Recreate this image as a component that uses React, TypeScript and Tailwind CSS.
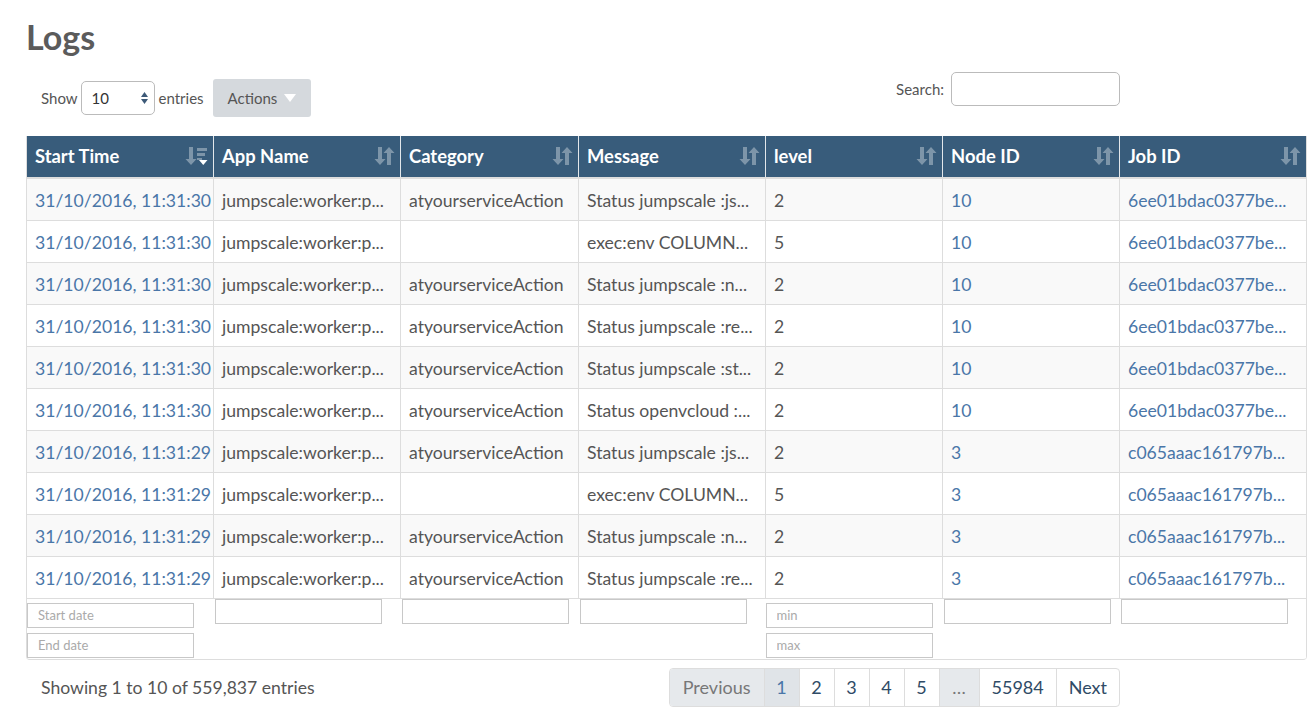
import React from "react"

const rows = [
    ["31/10/2016, 11:31:30", "jumpscale:worker:p...", "atyourserviceAction", "Status jumpscale :js...", "2", "10", "6ee01bdac0377be..."],
    ["31/10/2016, 11:31:30", "jumpscale:worker:p...", "", "exec:env COLUMN...", "5", "10", "6ee01bdac0377be..."],
    ["31/10/2016, 11:31:30", "jumpscale:worker:p...", "atyourserviceAction", "Status jumpscale :n...", "2", "10", "6ee01bdac0377be..."],
    ["31/10/2016, 11:31:30", "jumpscale:worker:p...", "atyourserviceAction", "Status jumpscale :re...", "2", "10", "6ee01bdac0377be..."],
    ["31/10/2016, 11:31:30", "jumpscale:worker:p...", "atyourserviceAction", "Status jumpscale :st...", "2", "10", "6ee01bdac0377be..."],
    ["31/10/2016, 11:31:30", "jumpscale:worker:p...", "atyourserviceAction", "Status openvcloud :...", "2", "10", "6ee01bdac0377be..."],
    ["31/10/2016, 11:31:29", "jumpscale:worker:p...", "atyourserviceAction", "Status jumpscale :js...", "2", "3", "c065aaac161797b..."],
    ["31/10/2016, 11:31:29", "jumpscale:worker:p...", "", "exec:env COLUMN...", "5", "3", "c065aaac161797b..."],
    ["31/10/2016, 11:31:29", "jumpscale:worker:p...", "atyourserviceAction", "Status jumpscale :n...", "2", "3", "c065aaac161797b..."],
    ["31/10/2016, 11:31:29", "jumpscale:worker:p...", "atyourserviceAction", "Status jumpscale :re...", "2", "3", "c065aaac161797b..."],
]

const columns = [
    { title: "Start Time", width: "w-[187px]" },
    { title: "App Name", width: "w-[187px]" },
    { title: "Category", width: "w-[178px]" },
    { title: "Message", width: "w-[187px]" },
    { title: "level", width: "w-[177px]" },
    { title: "Node ID", width: "w-[177px]" },
    { title: "Job ID", width: "w-[187px]" },
]

const linkCols = [0, 5, 6]

const SortIcon = () => (
    <svg width="21" height="22" viewBox="0 0 21 22" className="opacity-35">
        <path d="M4 2h4v12h3.5L6 20 0.5 14H4z" fill="#fff" />
        <path d="M13 20h4V8h3.5L15 2 9.5 8H13z" fill="#fff" />
    </svg>
)

const SortDescIcon = () => (
    <svg width="23" height="22" viewBox="0 0 23 22">
        <path d="M4 2h4v12h3.5L6 20 0.5 14H4z" fill="#fff" opacity="0.35" />
        <rect x="12" y="3" width="10" height="3" fill="#fff" opacity="0.35" />
        <rect x="12" y="8" width="8" height="3" fill="#fff" opacity="0.35" />
        <rect x="12" y="13" width="5" height="2" fill="#fff" opacity="0.35" />
        <path d="M14 15h8.5l-4.25 5z" fill="#fff" />
    </svg>
)

const FilterInput = ({ placeholder }: { placeholder?: string }) => (
    <input
        placeholder={placeholder}
        className="block w-[167px] h-[25px] border border-[#c8c8c8] px-[10px] text-[13px] text-[#555] placeholder:text-[#aaa] outline-none bg-white"
    />
)

const App = () => {
    return (
        <div className="w-[1315px] min-h-[714px] bg-white px-[26px] font-['Lato','Open_Sans',sans-serif] text-[#555]">
            <h1 className="pt-[15px] text-[34px] leading-[44px] font-bold text-[#5b5b5b]">Logs</h1>

            <div className="flex w-[1094px] justify-between items-start">
                <div className="flex items-center pl-[15px] pt-[20px] text-[15px]">
                    <span>Show</span>
                    <div className="ml-[3px] flex items-center justify-between w-[74px] h-[34px] border border-[#bbb] rounded-[5px] pl-[10px] pr-[6px] text-[15px] text-[#333]">
                        <span>10</span>
                        <svg width="7" height="12" viewBox="0 0 7 12">
                            <path d="M3.5 0L7 5H0z" fill="#3d5a78" />
                            <path d="M3.5 12L7 7H0z" fill="#3d5a78" />
                        </svg>
                    </div>
                    <span className="ml-[4px]">entries</span>
                    <button className="ml-[9px] flex items-center gap-[7px] h-[38px] px-[15px] bg-[#d5d9dd] rounded-[3px] text-[15px] text-[#555]">
                        Actions
                        <svg width="12" height="8" viewBox="0 0 12 8">
                            <path d="M0 0h12L6 8z" fill="#fff" />
                        </svg>
                    </button>
                </div>
                <div className="flex items-center pt-[13px] text-[15px]">
                    <span>Search:</span>
                    <input className="ml-[7px] w-[169px] h-[34px] border border-[#bbb] rounded-[5px] outline-none" />
                </div>
            </div>

            <div className="mt-[19px] w-[1281px] border-b border-[#ddd] rounded-b-[4px] overflow-hidden">
                <table className="w-[1281px] table-fixed border-collapse border-x border-[#ddd]">
                    <colgroup>
                        {columns.map((c) => (
                            <col key={c.title} className={c.width} />
                        ))}
                    </colgroup>
                    <thead>
                        <tr className="bg-[#385c7b] h-[42px] border-b-2 border-[#ddd]">
                            {columns.map((c, i) => (
                                <th
                                    key={c.title}
                                    className={`text-left text-white text-[18.4px] font-bold pl-[8px] pr-[5px] ${i < columns.length - 1 ? "border-r border-[#e2e7eb]" : ""}`}
                                >
                                    <div className="flex items-center justify-between">
                                        <span>{c.title}</span>
                                        <span className="flex">{i === 0 ? <SortDescIcon /> : <SortIcon />}</span>
                                    </div>
                                </th>
                            ))}
                        </tr>
                    </thead>
                    <tbody>
                        {rows.map((r, ri) => (
                            <tr key={ri} className={`h-[42px] border-b border-[#ddd] ${ri % 2 === 0 ? "bg-[#f9f9f9]" : "bg-white"}`}>
                                {r.map((cell, ci) => (
                                    <td
                                        key={ci}
                                        className={`px-[8px] pt-[4px] pb-0 text-[17.6px] whitespace-nowrap overflow-hidden ${linkCols.includes(ci) ? "text-[#4a76a8]" : "text-[#555]"} ${ci < r.length - 1 ? "border-r border-[#ddd]" : ""}`}
                                    >
                                        {cell}
                                    </td>
                                ))}
                            </tr>
                        ))}
                        <tr className="align-top h-[60px]">
                            <td className="pt-[4px] pb-[1px]">
                                <div className="flex flex-col gap-[5px]">
                                    <FilterInput placeholder="Start date" />
                                    <FilterInput placeholder="End date" />
                                </div>
                            </td>
                            <td className="pl-[1px]"><FilterInput /></td>
                            <td className="pl-[1px]"><FilterInput /></td>
                            <td className="pl-[1px]"><FilterInput /></td>
                            <td className="pt-[4px] pb-[1px]">
                                <div className="flex flex-col gap-[5px]">
                                    <FilterInput placeholder="min" />
                                    <FilterInput placeholder="max" />
                                </div>
                            </td>
                            <td className="pl-[1px]"><FilterInput /></td>
                            <td className="pl-[1px]"><FilterInput /></td>
                        </tr>
                    </tbody>
                </table>
            </div>

            <div className="flex items-center mt-[8px] w-[1094px]">
                <span className="pl-[15px] pt-[3px] text-[17.6px] text-[#555]">Showing 1 to 10 of 559,837 entries</span>
                <div className="ml-auto flex h-[39px] border border-[#ddd] rounded-[4px] overflow-hidden text-[18px]">
                    <span className="flex items-center px-[13px] bg-[#e6e9ec] text-[#777] border-r border-[#ddd]">Previous</span>
                    <span className="flex items-center justify-center w-[35px] bg-[#e0e4e8] text-[#4a76a8] border-r border-[#ddd]">1</span>
                    {["2", "3", "4", "5"].map((p) => (
                        <span key={p} className="flex items-center justify-center w-[35px] text-[#2f4b66] border-r border-[#ddd]">{p}</span>
                    ))}
                    <span className="flex items-center justify-center w-[40px] bg-[#e6e9ec] text-[#777] border-r border-[#ddd]">…</span>
                    <span className="flex items-center px-[12px] text-[#2f4b66] border-r border-[#ddd]">55984</span>
                    <span className="flex items-center px-[12px] text-[#2f4b66]">Next</span>
                </div>
            </div>
        </div>
    )
}

export default App
